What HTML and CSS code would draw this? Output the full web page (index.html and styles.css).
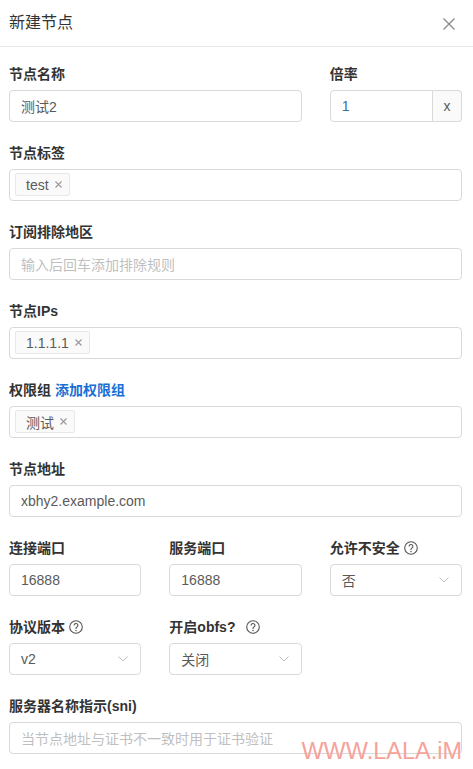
FILE: index.html
```html
<!DOCTYPE html>
<html lang="zh-CN">
<head>
<meta charset="utf-8">
<title>新建节点</title>
<link rel="stylesheet" href="styles.css">
</head>
<body>
<div class="drawer">
  <div class="header">
    <div class="title">新建节点</div>
    <button class="close" aria-label="close">
      <svg width="12" height="12" viewBox="0 0 12 12"><path d="M0.5 0.5L11.5 11.5M11.5 0.5L0.5 11.5" stroke="#8c8c8c" stroke-width="1.4" fill="none"/></svg>
    </button>
  </div>
  <div class="form">
    <div class="item span2">
      <div class="label">节点名称</div>
      <div class="input">测试2</div>
    </div>
    <div class="item">
      <div class="label">倍率</div>
      <div class="group">
        <div class="input gin">1</div>
        <div class="addon">x</div>
      </div>
    </div>
    <div class="item span3">
      <div class="label">节点标签</div>
      <div class="tags">
        <span class="tag">test<svg class="tx" width="7" height="7" viewBox="0 0 7 7"><path d="M0.5 0.5L6.5 6.5M6.5 0.5L0.5 6.5" stroke="#999" stroke-width="1.1" fill="none"/></svg></span>
      </div>
    </div>
    <div class="item span3">
      <div class="label">订阅排除地区</div>
      <div class="input ph">输入后回车添加排除规则</div>
    </div>
    <div class="item span3">
      <div class="label">节点IPs</div>
      <div class="tags">
        <span class="tag">1.1.1.1<svg class="tx" width="7" height="7" viewBox="0 0 7 7"><path d="M0.5 0.5L6.5 6.5M6.5 0.5L0.5 6.5" stroke="#999" stroke-width="1.1" fill="none"/></svg></span>
      </div>
    </div>
    <div class="item span3">
      <div class="label">权限组 <a class="link">添加权限组</a></div>
      <div class="tags">
        <span class="tag">测试<svg class="tx" width="7" height="7" viewBox="0 0 7 7"><path d="M0.5 0.5L6.5 6.5M6.5 0.5L0.5 6.5" stroke="#999" stroke-width="1.1" fill="none"/></svg></span>
      </div>
    </div>
    <div class="item span3">
      <div class="label">节点地址</div>
      <div class="input">xbhy2.example.com</div>
    </div>
    <div class="item">
      <div class="label">连接端口</div>
      <div class="input">16888</div>
    </div>
    <div class="item">
      <div class="label">服务端口</div>
      <div class="input">16888</div>
    </div>
    <div class="item">
      <div class="label">允许不安全<svg class="q" width="14" height="14" viewBox="0 0 14 14"><circle cx="7" cy="7" r="6.3" stroke="#555" stroke-width="1.1" fill="none"/><path d="M5.1 5.5a1.9 1.9 0 1 1 2.8 1.6c-.6.3-.9.7-.9 1.3v.5" stroke="#555" stroke-width="1.1" fill="none"/><circle cx="7" cy="10.4" r=".75" fill="#555"/></svg></div>
      <div class="input select">否<svg class="arrow" width="10" height="6" viewBox="0 0 10 6"><path d="M0.5 0.5L5 5L9.5 0.5" stroke="#bfbfbf" stroke-width="1" fill="none"/></svg></div>
    </div>
    <div class="item">
      <div class="label">协议版本<svg class="q" width="14" height="14" viewBox="0 0 14 14"><circle cx="7" cy="7" r="6.3" stroke="#555" stroke-width="1.1" fill="none"/><path d="M5.1 5.5a1.9 1.9 0 1 1 2.8 1.6c-.6.3-.9.7-.9 1.3v.5" stroke="#555" stroke-width="1.1" fill="none"/><circle cx="7" cy="10.4" r=".75" fill="#555"/></svg></div>
      <div class="input select">v2<svg class="arrow" width="10" height="6" viewBox="0 0 10 6"><path d="M0.5 0.5L5 5L9.5 0.5" stroke="#bfbfbf" stroke-width="1" fill="none"/></svg></div>
    </div>
    <div class="item">
      <div class="label">开启obfs?<svg class="q wide" width="14" height="14" viewBox="0 0 14 14"><circle cx="7" cy="7" r="6.3" stroke="#555" stroke-width="1.1" fill="none"/><path d="M5.1 5.5a1.9 1.9 0 1 1 2.8 1.6c-.6.3-.9.7-.9 1.3v.5" stroke="#555" stroke-width="1.1" fill="none"/><circle cx="7" cy="10.4" r=".75" fill="#555"/></svg></div>
      <div class="input select">关闭<svg class="arrow" width="10" height="6" viewBox="0 0 10 6"><path d="M0.5 0.5L5 5L9.5 0.5" stroke="#bfbfbf" stroke-width="1" fill="none"/></svg></div>
    </div>
    <div class="item span3">
      <div class="label">服务器名称指示(sni)</div>
      <div class="input ph">当节点地址与证书不一致时用于证书验证</div>
    </div>
  </div>
</div>
<div class="watermark">WWW.LALA.iM</div>
</body>
</html>
```
FILE: styles.css
```css
html, body {
  margin: 0;
  padding: 0;
  background: #fff;
}
body {
  font-family: "Liberation Sans", "Noto Sans CJK SC", sans-serif;
  font-size: 14px;
  color: #333;
  overflow: hidden;
}
.drawer {
  width: 473px;
}
.header {
  height: 46px;
  border-bottom: 1px solid #e8e8e8;
  display: flex;
  align-items: center;
  justify-content: space-between;
  padding: 0 18px 0 9px;
}
.title {
  font-size: 16px;
  line-height: 22px;
  color: #333;
}
.close {
  border: 0;
  background: none;
  padding: 0;
  width: 12px;
  height: 12px;
  display: flex;
  margin-top: 1px;
}
.form {
  display: grid;
  grid-template-columns: repeat(3, 1fr);
  column-gap: 28px;
  row-gap: 20px;
  padding: 16px 11px 0 9px;
}
.span2 { grid-column: span 2; }
.span3 { grid-column: span 3; }
.label {
  font-size: 14px;
  line-height: 22px;
  font-weight: 700;
  color: #333;
  margin-bottom: 5px;
  display: flex;
  align-items: center;
  white-space: pre;
}
.link {
  color: #1a6fd6;
}
.q {
  margin-left: 4px;
}
.q.wide {
  margin-left: 11px;
}
.input {
  box-sizing: border-box;
  height: 32px;
  border: 1px solid #d9d9d9;
  border-radius: 4px;
  padding: 0 11px;
  display: flex;
  align-items: center;
  color: #5a5a5a;
  font-size: 14px;
  background: #fff;
}
.ph {
  color: #bfbfbf;
}
.select {
  justify-content: space-between;
  padding-right: 12px;
}
.group {
  display: flex;
}
.gin {
  flex: 1;
  border-radius: 4px 0 0 4px;
  color: #3a6ea5;
}
.addon {
  box-sizing: border-box;
  width: 29px;
  height: 32px;
  border: 1px solid #d9d9d9;
  border-left: 0;
  border-radius: 0 4px 4px 0;
  background: #fafafa;
  display: flex;
  align-items: center;
  justify-content: center;
  color: #5a5a5a;
  font-size: 14px;
}
.tags {
  box-sizing: border-box;
  height: 32px;
  border: 1px solid #d9d9d9;
  border-radius: 4px;
  padding: 3px 5px;
  display: flex;
  align-items: flex-start;
}
.tag {
  box-sizing: border-box;
  height: 23px;
  border: 1px solid #e8e8e8;
  border-radius: 2px;
  background: #fafafa;
  padding: 0 7px 0 10px;
  display: flex;
  align-items: center;
  color: #5a5a5a;
  font-size: 14px;
}
.tx {
  margin-left: 6px;
}
.watermark {
  position: absolute;
  top: 739px;
  right: 11px;
  font-family: "Liberation Sans", Arial, sans-serif;
  font-size: 23.5px;
  line-height: 24px;
  color: #f6a29a;
}
```
